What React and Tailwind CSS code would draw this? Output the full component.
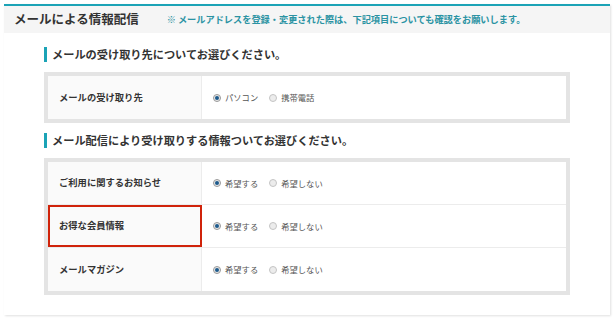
import React from 'react';

const font = { fontFamily: '"Noto Sans CJK JP", "Noto Sans", sans-serif' };

function Radio({ checked, label }) {
  return (
    <label className="flex items-center gap-[4px]">
      <span
        className={`flex h-[8px] w-[8px] items-center justify-center rounded-full border ${
          checked ? 'border-[#9a9a9a] bg-[#e8e8e8]' : 'border-[#c4c4c4] bg-[#ececec]'
        }`}
      >
        {checked && <span className="h-[4px] w-[4px] rounded-full bg-[#1d5a8c]" />}
      </span>
      <span className="text-[8.3px] text-[#555]">{label}</span>
    </label>
  );
}

function Row({ label, options, selected, highlight, last }) {
  return (
    <div className={`flex h-[43px] ${last ? '' : 'border-b border-[#ececec]'}`}>
      <div
        className={
          highlight
            ? 'flex w-[154px] shrink-0 items-center border-2 border-[#d0230a] bg-[#fafafa] pl-[9px]'
            : 'flex w-[154px] shrink-0 items-center border-r border-[#ececec] bg-[#fafafa] pl-[11px]'
        }
      >
        <span className="text-[9.3px] font-bold text-[#333]">{label}</span>
      </div>
      <div className="flex flex-1 items-center gap-[11px] bg-white pl-[11px]">
        {options.map((o, i) => (
          <Radio key={o} label={o} checked={i === selected} />
        ))}
      </div>
    </div>
  );
}

function SectionTitle({ children }) {
  return (
    <div className="flex h-[15px] items-center border-l-[3px] border-[#1ba3b6] pl-[5px]">
      <span className="text-[11.2px] font-bold leading-none text-[#333]">{children}</span>
    </div>
  );
}

export default function App() {
  const hope = ['希望する', '希望しない'];
  return (
    <div className="h-[321px] w-[615px] bg-white pl-[4px] pr-[5px] pt-[4px]" style={font}>
      <div className="h-[311px] border-t-2 border-[#1ba3b6] bg-white shadow-[1px_1px_2px_rgba(0,0,0,0.12)]">
        <div className="flex h-[27px] items-center bg-[#f5f5f5] pl-[10px]">
          <h1 className="text-[12.5px] font-bold text-[#333]">メールによる情報配信</h1>
          <p className="ml-[28px] text-[9.2px] font-bold text-[#2b93a3]">
            ※ メールアドレスを登録・変更された際は、下記項目についても確認をお願いします。
          </p>
        </div>

        <div className="pl-[40px] pt-[14px]">
          <SectionTitle>メールの受け取り先についてお選びください。</SectionTitle>

          <div className="mt-[10px] w-[526px] border-4 border-[#e4e4e4]">
            <Row label="メールの受け取り先" options={['パソコン', '携帯電話']} selected={0} last />
          </div>

          <div className="mt-[10px]">
            <SectionTitle>メール配信により受け取りする情報ついてお選びください。</SectionTitle>
          </div>

          <div className="mt-[10px] w-[526px] border-4 border-[#e4e4e4]">
            <Row label="ご利用に関するお知らせ" options={hope} selected={0} />
            <Row label="お得な会員情報" options={hope} selected={0} highlight />
            <Row label="メールマガジン" options={hope} selected={0} last />
          </div>
        </div>
      </div>
    </div>
  );
}
